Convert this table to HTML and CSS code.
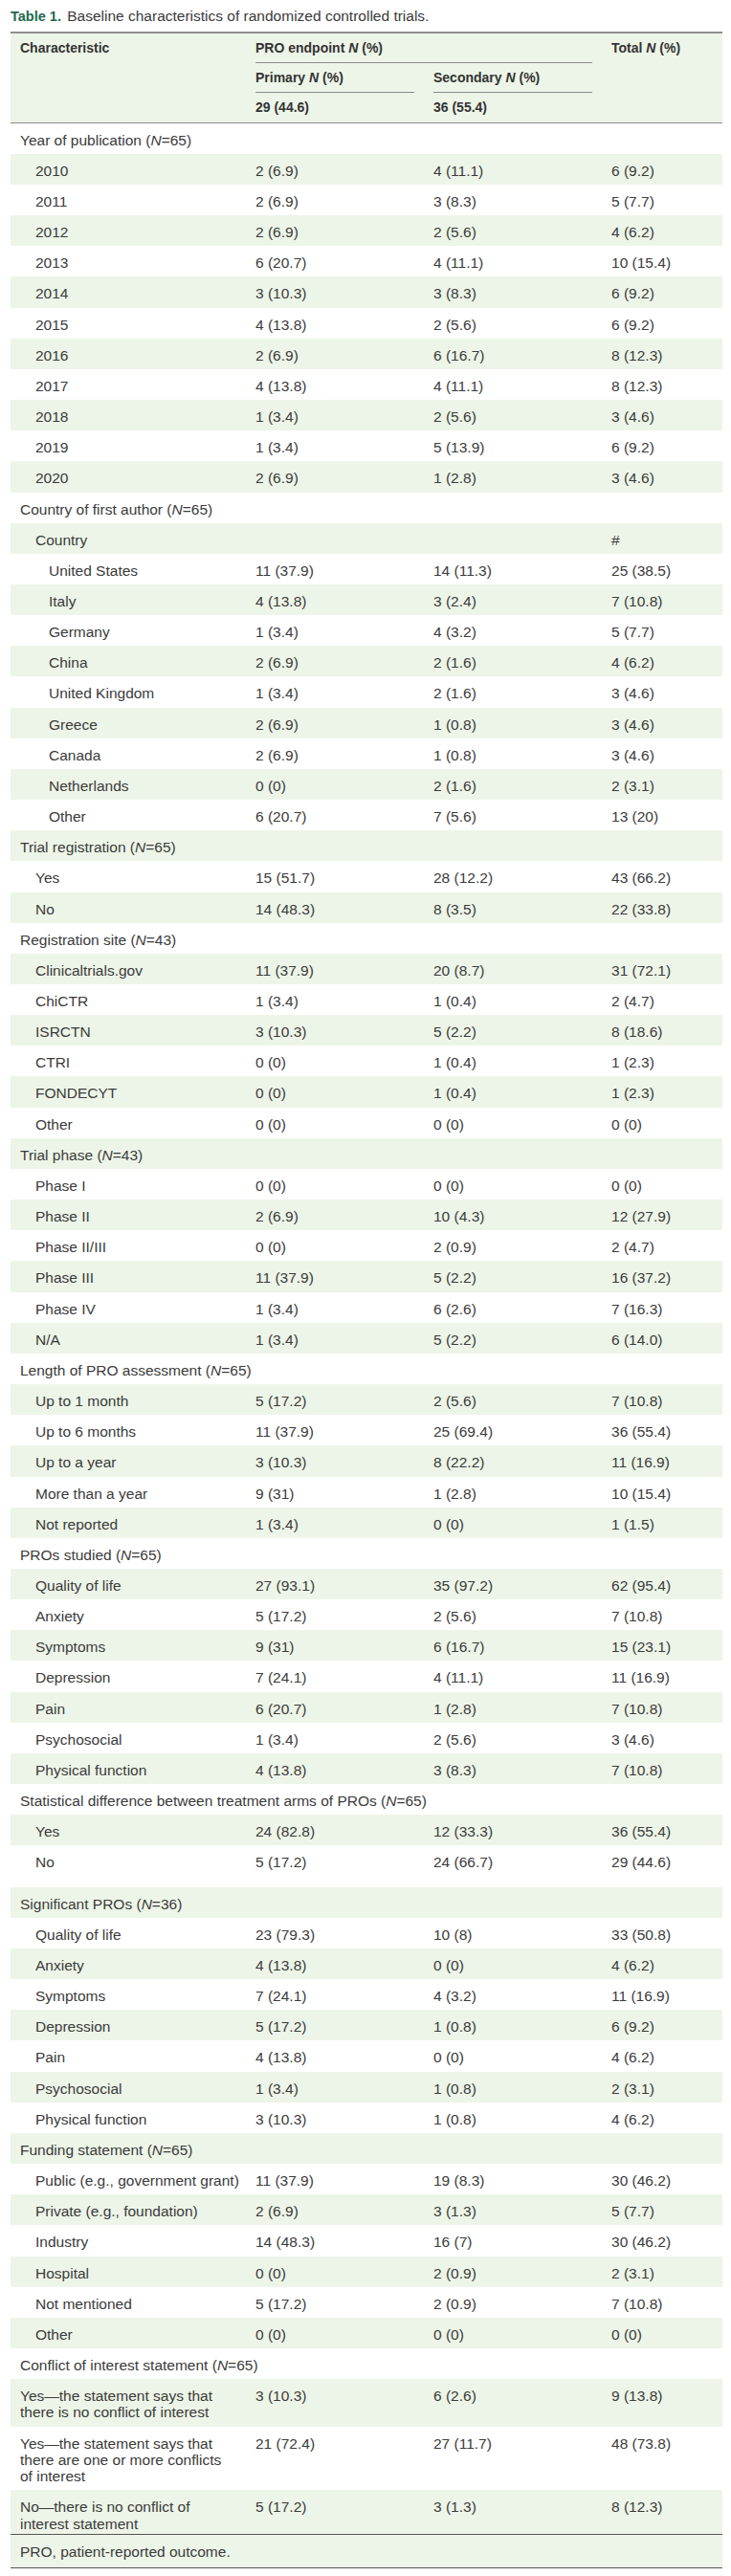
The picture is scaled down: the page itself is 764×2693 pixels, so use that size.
FILE: index.html
```html
<!DOCTYPE html>
<html lang="en">
<head>
<meta charset="utf-8">
<title>Table 1. Baseline characteristics of randomized controlled trials</title>
<link rel="stylesheet" href="styles.css">
</head>
<body>
<div class="page">
  <p class="caption"><span class="label">Table 1.</span> Baseline characteristics of randomized controlled trials.</p>
  <table class="tbl">
    <colgroup>
      <col class="c1"><col class="c2"><col class="c3"><col class="c4">
    </colgroup>
    <thead>
      <tr>
        <th rowspan="3" class="rs top hb"><div class="hd">Characteristic</div></th>
        <th colspan="2" class="top"><div class="hd rule">PRO endpoint <i>N</i> (%)</div></th>
        <th rowspan="3" class="rs top hb"><div class="hd">Total <i>N</i> (%)</div></th>
      </tr>
      <tr>
        <th><div class="hd rule">Primary <i>N</i> (%)</div></th>
        <th><div class="hd rule">Secondary <i>N</i> (%)</div></th>
      </tr>
      <tr>
        <th class="hb"><div class="hd last">29 (44.6)</div></th>
        <th class="hb"><div class="hd last">36 (55.4)</div></th>
      </tr>
    </thead>
    <tbody>
      <tr><td class="sec">Year of publication (<i>N</i>=65)</td><td></td><td></td><td></td></tr>
      <tr><td class="l1">2010</td><td>2 (6.9)</td><td>4 (11.1)</td><td>6 (9.2)</td></tr>
      <tr><td class="l1">2011</td><td>2 (6.9)</td><td>3 (8.3)</td><td>5 (7.7)</td></tr>
      <tr><td class="l1">2012</td><td>2 (6.9)</td><td>2 (5.6)</td><td>4 (6.2)</td></tr>
      <tr><td class="l1">2013</td><td>6 (20.7)</td><td>4 (11.1)</td><td>10 (15.4)</td></tr>
      <tr><td class="l1">2014</td><td>3 (10.3)</td><td>3 (8.3)</td><td>6 (9.2)</td></tr>
      <tr><td class="l1">2015</td><td>4 (13.8)</td><td>2 (5.6)</td><td>6 (9.2)</td></tr>
      <tr><td class="l1">2016</td><td>2 (6.9)</td><td>6 (16.7)</td><td>8 (12.3)</td></tr>
      <tr><td class="l1">2017</td><td>4 (13.8)</td><td>4 (11.1)</td><td>8 (12.3)</td></tr>
      <tr><td class="l1">2018</td><td>1 (3.4)</td><td>2 (5.6)</td><td>3 (4.6)</td></tr>
      <tr><td class="l1">2019</td><td>1 (3.4)</td><td>5 (13.9)</td><td>6 (9.2)</td></tr>
      <tr><td class="l1">2020</td><td>2 (6.9)</td><td>1 (2.8)</td><td>3 (4.6)</td></tr>

      <tr><td class="sec">Country of first author (<i>N</i>=65)</td><td></td><td></td><td></td></tr>
      <tr><td class="l1">Country</td><td></td><td></td><td>#</td></tr>
      <tr><td class="l2">United States</td><td>11 (37.9)</td><td>14 (11.3)</td><td>25 (38.5)</td></tr>
      <tr><td class="l2">Italy</td><td>4 (13.8)</td><td>3 (2.4)</td><td>7 (10.8)</td></tr>
      <tr><td class="l2">Germany</td><td>1 (3.4)</td><td>4 (3.2)</td><td>5 (7.7)</td></tr>
      <tr><td class="l2">China</td><td>2 (6.9)</td><td>2 (1.6)</td><td>4 (6.2)</td></tr>
      <tr><td class="l2">United Kingdom</td><td>1 (3.4)</td><td>2 (1.6)</td><td>3 (4.6)</td></tr>
      <tr><td class="l2">Greece</td><td>2 (6.9)</td><td>1 (0.8)</td><td>3 (4.6)</td></tr>
      <tr><td class="l2">Canada</td><td>2 (6.9)</td><td>1 (0.8)</td><td>3 (4.6)</td></tr>
      <tr><td class="l2">Netherlands</td><td>0 (0)</td><td>2 (1.6)</td><td>2 (3.1)</td></tr>
      <tr><td class="l2">Other</td><td>6 (20.7)</td><td>7 (5.6)</td><td>13 (20)</td></tr>

      <tr><td class="sec">Trial registration (<i>N</i>=65)</td><td></td><td></td><td></td></tr>
      <tr><td class="l1">Yes</td><td>15 (51.7)</td><td>28 (12.2)</td><td>43 (66.2)</td></tr>
      <tr><td class="l1">No</td><td>14 (48.3)</td><td>8 (3.5)</td><td>22 (33.8)</td></tr>

      <tr><td class="sec">Registration site (<i>N</i>=43)</td><td></td><td></td><td></td></tr>
      <tr><td class="l1">Clinicaltrials.gov</td><td>11 (37.9)</td><td>20 (8.7)</td><td>31 (72.1)</td></tr>
      <tr><td class="l1">ChiCTR</td><td>1 (3.4)</td><td>1 (0.4)</td><td>2 (4.7)</td></tr>
      <tr><td class="l1">ISRCTN</td><td>3 (10.3)</td><td>5 (2.2)</td><td>8 (18.6)</td></tr>
      <tr><td class="l1">CTRI</td><td>0 (0)</td><td>1 (0.4)</td><td>1 (2.3)</td></tr>
      <tr><td class="l1">FONDECYT</td><td>0 (0)</td><td>1 (0.4)</td><td>1 (2.3)</td></tr>
      <tr><td class="l1">Other</td><td>0 (0)</td><td>0 (0)</td><td>0 (0)</td></tr>

      <tr><td class="sec">Trial phase (<i>N</i>=43)</td><td></td><td></td><td></td></tr>
      <tr><td class="l1">Phase I</td><td>0 (0)</td><td>0 (0)</td><td>0 (0)</td></tr>
      <tr><td class="l1">Phase II</td><td>2 (6.9)</td><td>10 (4.3)</td><td>12 (27.9)</td></tr>
      <tr><td class="l1">Phase II/III</td><td>0 (0)</td><td>2 (0.9)</td><td>2 (4.7)</td></tr>
      <tr><td class="l1">Phase III</td><td>11 (37.9)</td><td>5 (2.2)</td><td>16 (37.2)</td></tr>
      <tr><td class="l1">Phase IV</td><td>1 (3.4)</td><td>6 (2.6)</td><td>7 (16.3)</td></tr>
      <tr><td class="l1">N/A</td><td>1 (3.4)</td><td>5 (2.2)</td><td>6 (14.0)</td></tr>

      <tr><td class="sec">Length of PRO assessment (<i>N</i>=65)</td><td></td><td></td><td></td></tr>
      <tr><td class="l1">Up to 1 month</td><td>5 (17.2)</td><td>2 (5.6)</td><td>7 (10.8)</td></tr>
      <tr><td class="l1">Up to 6 months</td><td>11 (37.9)</td><td>25 (69.4)</td><td>36 (55.4)</td></tr>
      <tr><td class="l1">Up to a year</td><td>3 (10.3)</td><td>8 (22.2)</td><td>11 (16.9)</td></tr>
      <tr><td class="l1">More than a year</td><td>9 (31)</td><td>1 (2.8)</td><td>10 (15.4)</td></tr>
      <tr><td class="l1">Not reported</td><td>1 (3.4)</td><td>0 (0)</td><td>1 (1.5)</td></tr>

      <tr><td class="sec">PROs studied (<i>N</i>=65)</td><td></td><td></td><td></td></tr>
      <tr><td class="l1">Quality of life</td><td>27 (93.1)</td><td>35 (97.2)</td><td>62 (95.4)</td></tr>
      <tr><td class="l1">Anxiety</td><td>5 (17.2)</td><td>2 (5.6)</td><td>7 (10.8)</td></tr>
      <tr><td class="l1">Symptoms</td><td>9 (31)</td><td>6 (16.7)</td><td>15 (23.1)</td></tr>
      <tr><td class="l1">Depression</td><td>7 (24.1)</td><td>4 (11.1)</td><td>11 (16.9)</td></tr>
      <tr><td class="l1">Pain</td><td>6 (20.7)</td><td>1 (2.8)</td><td>7 (10.8)</td></tr>
      <tr><td class="l1">Psychosocial</td><td>1 (3.4)</td><td>2 (5.6)</td><td>3 (4.6)</td></tr>
      <tr><td class="l1">Physical function</td><td>4 (13.8)</td><td>3 (8.3)</td><td>7 (10.8)</td></tr>

      <tr><td class="sec" colspan="4">Statistical difference between treatment arms of PROs (<i>N</i>=65)</td></tr>
      <tr><td class="l1">Yes</td><td>24 (82.8)</td><td>12 (33.3)</td><td>36 (55.4)</td></tr>
      <tr class="gap"><td class="l1">No</td><td>5 (17.2)</td><td>24 (66.7)</td><td>29 (44.6)</td></tr>

      <tr><td class="sec">Significant PROs (<i>N</i>=36)</td><td></td><td></td><td></td></tr>
      <tr><td class="l1">Quality of life</td><td>23 (79.3)</td><td>10 (8)</td><td>33 (50.8)</td></tr>
      <tr><td class="l1">Anxiety</td><td>4 (13.8)</td><td>0 (0)</td><td>4 (6.2)</td></tr>
      <tr><td class="l1">Symptoms</td><td>7 (24.1)</td><td>4 (3.2)</td><td>11 (16.9)</td></tr>
      <tr><td class="l1">Depression</td><td>5 (17.2)</td><td>1 (0.8)</td><td>6 (9.2)</td></tr>
      <tr><td class="l1">Pain</td><td>4 (13.8)</td><td>0 (0)</td><td>4 (6.2)</td></tr>
      <tr><td class="l1">Psychosocial</td><td>1 (3.4)</td><td>1 (0.8)</td><td>2 (3.1)</td></tr>
      <tr><td class="l1">Physical function</td><td>3 (10.3)</td><td>1 (0.8)</td><td>4 (6.2)</td></tr>

      <tr><td class="sec">Funding statement (<i>N</i>=65)</td><td></td><td></td><td></td></tr>
      <tr><td class="l1">Public (e.g., government grant)</td><td>11 (37.9)</td><td>19 (8.3)</td><td>30 (46.2)</td></tr>
      <tr><td class="l1">Private (e.g., foundation)</td><td>2 (6.9)</td><td>3 (1.3)</td><td>5 (7.7)</td></tr>
      <tr><td class="l1">Industry</td><td>14 (48.3)</td><td>16 (7)</td><td>30 (46.2)</td></tr>
      <tr><td class="l1">Hospital</td><td>0 (0)</td><td>2 (0.9)</td><td>2 (3.1)</td></tr>
      <tr><td class="l1">Not mentioned</td><td>5 (17.2)</td><td>2 (0.9)</td><td>7 (10.8)</td></tr>
      <tr><td class="l1">Other</td><td>0 (0)</td><td>0 (0)</td><td>0 (0)</td></tr>

      <tr><td class="sec">Conflict of interest statement (<i>N</i>=65)</td><td></td><td></td><td></td></tr>
      <tr><td class="multi">Yes—the statement says that<br>there is no conflict of interest</td><td>3 (10.3)</td><td>6 (2.6)</td><td>9 (13.8)</td></tr>
      <tr><td class="multi">Yes—the statement says that<br>there are one or more conflicts<br>of interest</td><td>21 (72.4)</td><td>27 (11.7)</td><td>48 (73.8)</td></tr>
      <tr class="final"><td class="multi">No—there is no conflict of<br>interest statement</td><td>5 (17.2)</td><td>3 (1.3)</td><td>8 (12.3)</td></tr>
    </tbody>
    <tfoot>
      <tr><td colspan="4">PRO, patient-reported outcome.</td></tr>
    </tfoot>
  </table>
</div>
</body>
</html>
```

FILE: styles.css
```css
html, body {
  margin: 0;
  padding: 0;
  background: #ffffff;
}

.page {
  padding: 7.7px 9px 10px 11px;
  font-family: "Liberation Sans", Arial, sans-serif;
  font-size: 15.5px;
  line-height: 17.3px;
  color: #3b3b3b;
}

.caption {
  margin: 0 0 6.7px 0;
  white-space: nowrap;
}

.caption .label {
  font-weight: bold;
  font-size: 14.5px;
  color: #1d6a4c;
  margin-right: 2px;
}

.tbl {
  width: 744px;
  table-layout: fixed;
  border-collapse: separate;
  border-spacing: 0;
}

.c1 { width: 246px; }
.c2 { width: 186px; }
.c3 { width: 186px; }
.c4 { width: 126px; }

.tbl thead th {
  background: #edf5e8;
  text-align: left;
  vertical-align: top;
  padding: 0 10px;
  font-weight: bold;
  font-size: 14px;
  color: #333333;
}

.tbl thead th.top {
  border-top: 2px solid #8e8e8e;
}

.tbl thead th.hb {
  border-bottom: 1.5px solid #8a8a8a;
}

.hd {
  padding: 7px 0 5.7px;
  white-space: nowrap;
}

.hd.rule {
  border-bottom: 1px solid #8a8a8a;
}

.hd.last {
  padding-bottom: 6.7px;
}

.tbl tbody td {
  padding: 9px 10px 5.87px;
  vertical-align: top;
  white-space: nowrap;
}

.tbl tbody tr:nth-child(even) td {
  background: #edf5e8;
}

.tbl tbody td.sec { padding-left: 10px; }
.tbl tbody td.l1 { padding-left: 26px; }
.tbl tbody td.l2 { padding-left: 40px; }
.tbl tbody td.multi { padding-left: 10px; }

.tbl tbody tr.gap td {
  padding-bottom: 17px;
}

.tbl tbody tr.final td {
  padding-bottom: 2.5px;
}

.tbl tfoot td {
  background: #edf5e8;
  border-top: 1px solid #555555;
  border-bottom: 1px solid #555555;
  padding: 9px 10px 7.7px;
}
```
